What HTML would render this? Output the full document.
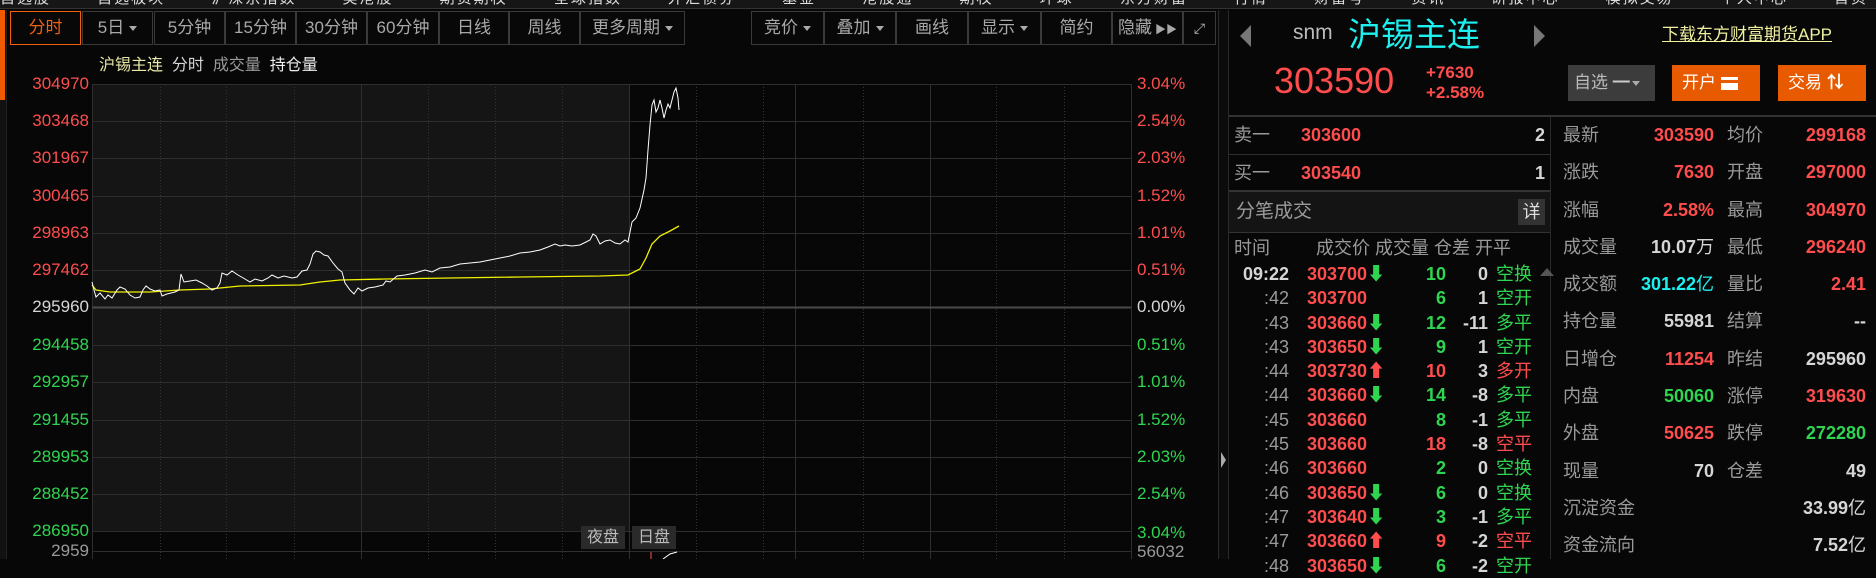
<!DOCTYPE html>
<html><head><meta charset="utf-8"><style>
*{margin:0;padding:0;box-sizing:border-box}
body{width:1876px;height:559px;background:#070707;overflow:hidden;position:relative;font-family:"Liberation Sans","Noto Sans CJK SC",sans-serif;color:#bbb}
.a{position:absolute;white-space:nowrap}
.tb{position:absolute;top:11px;height:34px;border:1px solid #3a3a3a;color:#a8a8a8;font-size:17px;line-height:32px;text-align:center;background:#080808;white-space:nowrap;overflow:hidden}
.tri{display:inline-block;width:0;height:0;border-left:4px solid transparent;border-right:4px solid transparent;border-top:5px solid #aaa;vertical-align:middle;margin-left:5px}
.ll{position:absolute;right:1787px;font-size:17px;line-height:20px;text-align:right}
.rl{position:absolute;left:1137px;font-size:17px;line-height:20px}
.r{color:#ff4d4d}.g{color:#2fd550}.w{color:#d6d6d6}.gr{color:#9a9a9a}
.tr{position:absolute;font-size:18px;font-weight:bold;line-height:22px}
.st{position:absolute;font-size:18px;line-height:22px}
</style></head><body>
<!-- top strip -->
<div class="a" style="left:0;top:0;width:1876px;height:9px;background:#161616;border-bottom:1px solid #333;overflow:hidden"><div class="a" style="left:0;top:-13px;font-size:15px;color:#ddd;word-spacing:40px;letter-spacing:2px">自选股 自选板块 沪深京指数 美港股 期货期权 全球指数 外汇债券 基金 港股通 期权 环球 东方财富 行情 财富号 资讯 研报中心 模拟交易 个人中心 首页</div></div>
<!-- left strip -->
<div class="a" style="left:0;top:10px;width:7px;height:549px;background:#111;border-right:1px solid #222"></div>
<div class="a" style="left:0;top:10px;width:5px;height:90px;background:#f05a00"></div>
<!-- toolbar -->
<div class="tb" style="left:10px;width:71px;border-color:#f06010;color:#f06010">分时</div>
<div class="tb" style="left:82px;width:71px">5日<span class="tri"></span></div>
<div class="tb" style="left:154px;width:71px">5分钟</div>
<div class="tb" style="left:225px;width:71px">15分钟</div>
<div class="tb" style="left:296px;width:71px">30分钟</div>
<div class="tb" style="left:367px;width:72px">60分钟</div>
<div class="tb" style="left:439px;width:70px">日线</div>
<div class="tb" style="left:509px;width:71px">周线</div>
<div class="tb" style="left:580px;width:105px">更多周期<span class="tri"></span></div>
<div class="tb" style="left:751px;width:73px">竞价<span class="tri"></span></div>
<div class="tb" style="left:824px;width:72px">叠加<span class="tri"></span></div>
<div class="tb" style="left:896px;width:72px">画线</div>
<div class="tb" style="left:968px;width:73px">显示<span class="tri"></span></div>
<div class="tb" style="left:1041px;width:71px">简约</div>
<div class="tb" style="left:1112px;width:71px;text-align:left;padding-left:5px">隐藏<span style="font-size:11px;margin-left:3px">▶▶</span></div>
<div class="tb" style="left:1183px;width:33px;font-size:14px;color:#bbb">⤢</div>
<!-- legend -->
<div class="a" style="left:99px;top:56px;font-size:16px;line-height:20px"><span style="color:#e8e8a8">沪锡主连</span>&nbsp; <span class="w">分时</span>&nbsp; <span class="gr">成交量</span>&nbsp; <span style="color:#eee">持仓量</span></div>
<!-- chart -->
<svg class="a" style="left:0;top:0" width="1228" height="559">
<rect x="92" y="84" width="537" height="448" fill="#151515"/>
<g stroke="#2e2e2e" stroke-width="1">
<line x1="92" y1="84.5" x2="1131" y2="84.5"/><line x1="92" y1="121.5" x2="1131" y2="121.5"/><line x1="92" y1="158.5" x2="1131" y2="158.5"/><line x1="92" y1="196.5" x2="1131" y2="196.5"/><line x1="92" y1="233.5" x2="1131" y2="233.5"/><line x1="92" y1="270.5" x2="1131" y2="270.5"/>
<line x1="92" y1="345.5" x2="1131" y2="345.5"/><line x1="92" y1="382.5" x2="1131" y2="382.5"/><line x1="92" y1="420.5" x2="1131" y2="420.5"/><line x1="92" y1="457.5" x2="1131" y2="457.5"/><line x1="92" y1="494.5" x2="1131" y2="494.5"/><line x1="92" y1="531.5" x2="1131" y2="531.5"/>
<line x1="92.5" y1="84" x2="92.5" y2="559"/><line x1="361.5" y1="84" x2="361.5" y2="559"/><line x1="629.5" y1="84" x2="629.5" y2="559"/><line x1="795.5" y1="84" x2="795.5" y2="559"/><line x1="930.5" y1="84" x2="930.5" y2="559"/><line x1="1131.5" y1="84" x2="1131.5" y2="559"/>
<line x1="92" y1="551.5" x2="1131" y2="551.5"/>
</g>
<line x1="92" y1="307.5" x2="1131" y2="307.5" stroke="#4a4a4a" stroke-width="2"/>
<g stroke="#333" stroke-width="1" stroke-dasharray="1,2">
<line x1="160.5" y1="84" x2="160.5" y2="559"/><line x1="226.5" y1="84" x2="226.5" y2="559"/><line x1="294.5" y1="84" x2="294.5" y2="559"/><line x1="428.5" y1="84" x2="428.5" y2="559"/><line x1="495.5" y1="84" x2="495.5" y2="559"/><line x1="562.5" y1="84" x2="562.5" y2="559"/><line x1="696.5" y1="84" x2="696.5" y2="559"/><line x1="763.5" y1="84" x2="763.5" y2="559"/><line x1="863.5" y1="84" x2="863.5" y2="559"/><line x1="996.5" y1="84" x2="996.5" y2="559"/><line x1="1064.5" y1="84" x2="1064.5" y2="559"/>
</g>
<polyline fill="none" stroke="#f0f000" stroke-width="1.3" points="92,285 96,290 110,292 150,292 180,290 210,289 240,286 300,285 320,282 340,280 385,279 450,278 520,277 600,276 628,275 640,269 646,258 652,244 660,236 670,231 679,226"/>
<polyline fill="none" stroke="#fff" stroke-width="1" points="92,282 94,290 96,297 100,293 105,299 108,295 112,298 117,290 120,287 125,289 130,295 135,298 140,297 143,290 146,286 150,289 155,291 160,290 162,296 167,294 175,292 179,290 181,274 184,282 190,281 196,280 202,283 207,286 212,290 217,288 220,283 222,273 227,275 232,271 238,275 245,279 250,282 255,279 262,281 268,278 272,275 278,278 284,276 292,278 297,277 302,271 307,270 310,264 313,254 316,251 320,252 324,255 328,256 333,263 338,269 342,272 345,283 350,290 354,294 358,288 362,291 368,288 375,287 383,285 386,281 390,282 397,276 405,275 415,273 425,270 432,272 440,268 450,267 460,264 470,263 480,262 490,260 500,258 510,256 520,253 530,252 540,250 548,247 555,244 560,246 565,245 572,246 580,245 586,242 590,240 593,234 596,236 600,244 605,241 610,240 615,243 620,244 625,240 628,242 632,222 636,218 640,208 644,190 646,178 648,150 650,125 652,105 654,100 656,112 658,108 660,100 662,108 664,118 666,110 668,104 670,108 672,100 674,92 676,88 678,98 679,110"/>
<line x1="651" y1="552" x2="651" y2="559" stroke="#ff4d4d"/>
<polyline fill="none" stroke="#fff" points="663,559 670,554 677,552"/>
</svg>
<!-- axis labels left -->
<div class="ll r" style="top:74px">304970</div>
<div class="ll r" style="top:111px">303468</div>
<div class="ll r" style="top:148px">301967</div>
<div class="ll r" style="top:186px">300465</div>
<div class="ll r" style="top:223px">298963</div>
<div class="ll r" style="top:260px">297462</div>
<div class="ll w" style="top:297px">295960</div>
<div class="ll g" style="top:335px">294458</div>
<div class="ll g" style="top:372px">292957</div>
<div class="ll g" style="top:410px">291455</div>
<div class="ll g" style="top:447px">289953</div>
<div class="ll g" style="top:484px">288452</div>
<div class="ll g" style="top:521px">286950</div>
<div class="ll gr" style="top:541px">2959</div>
<div class="rl r" style="top:74px">3.04%</div>
<div class="rl r" style="top:111px">2.54%</div>
<div class="rl r" style="top:148px">2.03%</div>
<div class="rl r" style="top:186px">1.52%</div>
<div class="rl r" style="top:223px">1.01%</div>
<div class="rl r" style="top:260px">0.51%</div>
<div class="rl w" style="top:297px">0.00%</div>
<div class="rl g" style="top:335px">0.51%</div>
<div class="rl g" style="top:372px">1.01%</div>
<div class="rl g" style="top:410px">1.52%</div>
<div class="rl g" style="top:447px">2.03%</div>
<div class="rl g" style="top:484px">2.54%</div>
<div class="rl g" style="top:523px">3.04%</div>
<div class="rl gr" style="top:542px">56032</div>
<div class="a" style="left:581px;top:526px;width:44px;height:23px;background:#2a2a2a;color:#bbb;font-size:16px;line-height:23px;text-align:center">夜盘</div>
<div class="a" style="left:632px;top:526px;width:44px;height:23px;background:#2a2a2a;color:#bbb;font-size:16px;line-height:23px;text-align:center">日盘</div>
<!-- divider -->
<div class="a" style="left:1218px;top:10px;width:11px;height:549px;background:#0b0b0b;border-left:1px solid #2a2a2a;border-right:1px solid #2a2a2a"></div>
<div class="a" style="left:1221px;top:452px;width:0;height:0;border-top:8px solid transparent;border-bottom:8px solid transparent;border-left:5px solid #aaa"></div>
<!-- right header -->
<div class="a" style="left:1240px;top:25px;width:0;height:0;border-top:11px solid transparent;border-bottom:11px solid transparent;border-right:11px solid #777"></div>
<div class="a" style="left:1534px;top:25px;width:0;height:0;border-top:11px solid transparent;border-bottom:11px solid transparent;border-left:11px solid #777"></div>
<div class="a" style="left:1293px;top:21px;font-size:21px;color:#bbb">snm</div>
<div class="a" style="left:1348px;top:13px;font-size:33px;color:#1ef0f0;line-height:44px">沪锡主连</div>
<div class="a" style="left:1662px;top:24px;font-size:17px;color:#f0f0a0;text-decoration:underline;line-height:22px">下载东方财富期货APP</div>
<div class="a r" style="left:1274px;top:60px;font-size:36px;line-height:42px">303590</div>
<div class="a r" style="left:1426px;top:63px;font-size:17px;font-weight:bold;line-height:20px">+7630<br>+2.58%</div>
<div class="a" style="left:1568px;top:65px;width:87px;height:36px;background:#3c3c3c;color:#bbb;font-size:17px;line-height:36px;padding-left:6px">自选 <b style="color:#ccc">━</b><span class="tri" style="margin-left:2px"></span></div>
<div class="a" style="left:1672px;top:65px;width:88px;height:36px;background:#e85a00;color:#fff;font-size:17px;line-height:36px;padding-left:10px">开户 <span style="display:inline-block;width:17px;height:13px;background:#fff;vertical-align:middle;border-top:3px solid #fff;box-shadow:inset 0 3px 0 #e85a00"></span></div>
<div class="a" style="left:1778px;top:65px;width:88px;height:36px;background:#e85a00;color:#fff;font-size:17px;line-height:36px;padding-left:10px">交易 <b>⇅</b></div>
<div class="a" style="left:1229px;top:115px;width:647px;height:2px;background:#333"></div>
<!-- bid/ask -->
<div class="a" style="left:1550px;top:117px;width:1px;height:442px;background:#2a2a2a"></div>
<div class="st gr" style="left:1234px;top:124px">卖一</div><div class="tr r" style="left:1301px;top:124px">303600</div><div class="tr w" style="left:1500px;top:124px;width:45px;text-align:right">2</div>
<div class="a" style="left:1229px;top:154px;width:321px;height:1px;background:#2e2e2e"></div>
<div class="st gr" style="left:1234px;top:162px">买一</div><div class="tr r" style="left:1301px;top:162px">303540</div><div class="tr w" style="left:1500px;top:162px;width:45px;text-align:right">1</div>
<div class="a" style="left:1229px;top:190px;width:321px;height:43px;background:#141414;border-top:2px solid #333;border-bottom:1px solid #333"></div>
<div class="st gr" style="left:1236px;top:201px;font-size:19px">分笔成交</div>
<div class="a" style="left:1518px;top:199px;width:27px;height:26px;background:#333;color:#ddd;font-size:18px;line-height:26px;text-align:center">详</div>
<div class="st gr" style="left:1234px;top:237px">时间</div>
<div class="st gr" style="left:1316px;top:237px;width:260px">成交价 成交量 仓差 开平</div>
<div class="a" style="left:1540px;top:268px;width:0;height:0;border-left:7px solid transparent;border-right:7px solid transparent;border-bottom:8px solid #555"></div>
<div class="a" style="left:1229px;top:262px;width:321px;font-size:18px;line-height:24.3px">
<div style="position:relative;height:24.3px"><b class="a w" style="right:261px">09:22</b><b class="a r" style="left:78px">303700<span class="g">⬇</span></b><b class="a g" style="right:104px">10</b><b class="a w" style="right:62px">0</b><span class="a g" style="left:267px">空换</span></div>
<div style="position:relative;height:24.3px"><span class="a gr" style="right:261px">:42</span><b class="a r" style="left:78px">303700</b><b class="a g" style="right:104px">6</b><b class="a w" style="right:62px">1</b><span class="a g" style="left:267px">空开</span></div>
<div style="position:relative;height:24.3px"><span class="a gr" style="right:261px">:43</span><b class="a r" style="left:78px">303660<span class="g">⬇</span></b><b class="a g" style="right:104px">12</b><b class="a w" style="right:62px">-11</b><span class="a g" style="left:267px">多平</span></div>
<div style="position:relative;height:24.3px"><span class="a gr" style="right:261px">:43</span><b class="a r" style="left:78px">303650<span class="g">⬇</span></b><b class="a g" style="right:104px">9</b><b class="a w" style="right:62px">1</b><span class="a g" style="left:267px">空开</span></div>
<div style="position:relative;height:24.3px"><span class="a gr" style="right:261px">:44</span><b class="a r" style="left:78px">303730⬆</b><b class="a r" style="right:104px">10</b><b class="a w" style="right:62px">3</b><span class="a r" style="left:267px">多开</span></div>
<div style="position:relative;height:24.3px"><span class="a gr" style="right:261px">:44</span><b class="a r" style="left:78px">303660<span class="g">⬇</span></b><b class="a g" style="right:104px">14</b><b class="a w" style="right:62px">-8</b><span class="a g" style="left:267px">多平</span></div>
<div style="position:relative;height:24.3px"><span class="a gr" style="right:261px">:45</span><b class="a r" style="left:78px">303660</b><b class="a g" style="right:104px">8</b><b class="a w" style="right:62px">-1</b><span class="a g" style="left:267px">多平</span></div>
<div style="position:relative;height:24.3px"><span class="a gr" style="right:261px">:45</span><b class="a r" style="left:78px">303660</b><b class="a r" style="right:104px">18</b><b class="a w" style="right:62px">-8</b><span class="a r" style="left:267px">空平</span></div>
<div style="position:relative;height:24.3px"><span class="a gr" style="right:261px">:46</span><b class="a r" style="left:78px">303660</b><b class="a g" style="right:104px">2</b><b class="a w" style="right:62px">0</b><span class="a g" style="left:267px">空换</span></div>
<div style="position:relative;height:24.3px"><span class="a gr" style="right:261px">:46</span><b class="a r" style="left:78px">303650<span class="g">⬇</span></b><b class="a g" style="right:104px">6</b><b class="a w" style="right:62px">0</b><span class="a g" style="left:267px">空换</span></div>
<div style="position:relative;height:24.3px"><span class="a gr" style="right:261px">:47</span><b class="a r" style="left:78px">303640<span class="g">⬇</span></b><b class="a g" style="right:104px">3</b><b class="a w" style="right:62px">-1</b><span class="a g" style="left:267px">多平</span></div>
<div style="position:relative;height:24.3px"><span class="a gr" style="right:261px">:47</span><b class="a r" style="left:78px">303660⬆</b><b class="a r" style="right:104px">9</b><b class="a w" style="right:62px">-2</b><span class="a r" style="left:267px">空平</span></div>
<div style="position:relative;height:24.3px"><span class="a gr" style="right:261px">:48</span><b class="a r" style="left:78px">303650<span class="g">⬇</span></b><b class="a g" style="right:104px">6</b><b class="a w" style="right:62px">-2</b><span class="a g" style="left:267px">空开</span></div>
</div>
<!-- stats -->
<div class="a" style="left:1551px;top:124px;width:325px;font-size:18px;line-height:22px">
<div style="position:relative;height:37.3px"><span class="a gr" style="left:12px">最新</span><b class="a r" style="right:162px">303590</b><span class="a gr" style="left:176px">均价</span><b class="a r" style="right:10px">299168</b></div>
<div style="position:relative;height:37.3px"><span class="a gr" style="left:12px">涨跌</span><b class="a r" style="right:162px">7630</b><span class="a gr" style="left:176px">开盘</span><b class="a r" style="right:10px">297000</b></div>
<div style="position:relative;height:37.3px"><span class="a gr" style="left:12px">涨幅</span><b class="a r" style="right:162px">2.58%</b><span class="a gr" style="left:176px">最高</span><b class="a r" style="right:10px">304970</b></div>
<div style="position:relative;height:37.3px"><span class="a gr" style="left:12px">成交量</span><b class="a w" style="right:162px">10.07<span style="font-weight:normal">万</span></b><span class="a gr" style="left:176px">最低</span><b class="a r" style="right:10px">296240</b></div>
<div style="position:relative;height:37.3px"><span class="a gr" style="left:12px">成交额</span><b class="a" style="right:162px;color:#1ef0f0">301.22<span style="font-weight:normal">亿</span></b><span class="a gr" style="left:176px">量比</span><b class="a r" style="right:10px">2.41</b></div>
<div style="position:relative;height:37.3px"><span class="a gr" style="left:12px">持仓量</span><b class="a w" style="right:162px">55981</b><span class="a gr" style="left:176px">结算</span><b class="a w" style="right:10px">--</b></div>
<div style="position:relative;height:37.3px"><span class="a gr" style="left:12px">日增仓</span><b class="a r" style="right:162px">11254</b><span class="a gr" style="left:176px">昨结</span><b class="a w" style="right:10px">295960</b></div>
<div style="position:relative;height:37.3px"><span class="a gr" style="left:12px">内盘</span><b class="a g" style="right:162px">50060</b><span class="a gr" style="left:176px">涨停</span><b class="a r" style="right:10px">319630</b></div>
<div style="position:relative;height:37.3px"><span class="a gr" style="left:12px">外盘</span><b class="a r" style="right:162px">50625</b><span class="a gr" style="left:176px">跌停</span><b class="a g" style="right:10px">272280</b></div>
<div style="position:relative;height:37.3px"><span class="a gr" style="left:12px">现量</span><b class="a w" style="right:162px">70</b><span class="a gr" style="left:176px">仓差</span><b class="a w" style="right:10px">49</b></div>
<div style="position:relative;height:37.3px"><span class="a gr" style="left:12px">沉淀资金</span><b class="a w" style="right:10px">33.99<span style="font-weight:normal">亿</span></b></div>
<div style="position:relative;height:37.3px"><span class="a gr" style="left:12px">资金流向</span><b class="a w" style="right:10px">7.52<span style="font-weight:normal">亿</span></b></div>
</div>
</body></html>
